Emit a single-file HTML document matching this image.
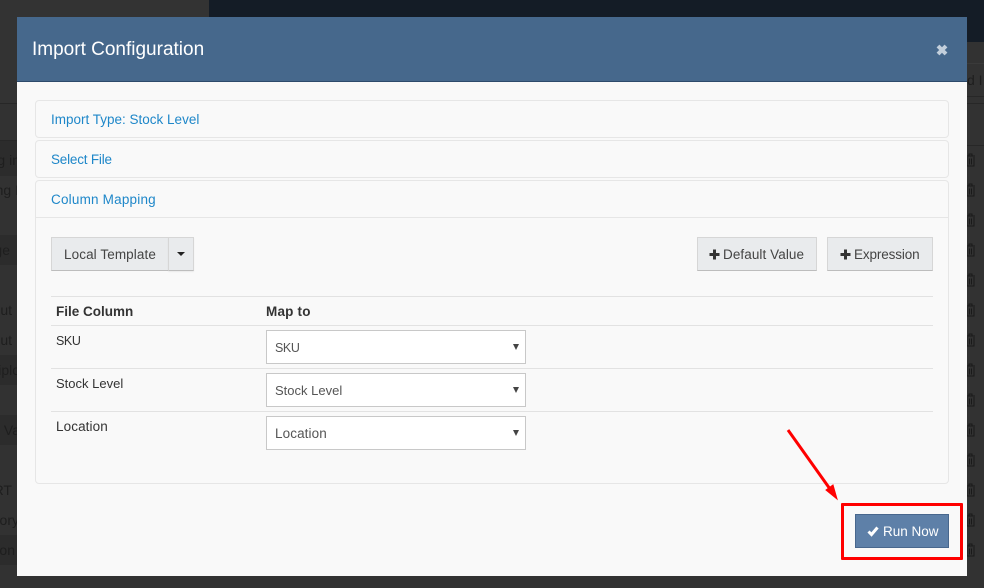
<!DOCTYPE html>
<html><head><meta charset="utf-8"><style>
html,body{margin:0;padding:0}
body{width:984px;height:588px;position:relative;overflow:hidden;background:#323232;font-family:"Liberation Sans",sans-serif;font-size:13.5px;color:#333}
div,span{position:absolute;box-sizing:border-box}
.t{white-space:nowrap;line-height:16px}
.bg{color:#1e1e1e;font-size:14px;white-space:nowrap;line-height:16px}
.row{height:1px;background:#272727}
.panel{left:35px;width:914px;background:#f9f9f9;border:1px solid #e6e6e6;border-radius:4px}
.link{color:#1e87c9;left:51px}
.btn{background:#e9ebed;border:1px solid #d6d6d6;border-bottom:1px solid #bdbdbd;top:237px;height:34px}
.line{left:51px;width:882px;height:1px;background:#e2e2e2}
.sel{left:266px;width:260px;height:34px;background:#fff;border:1px solid #c8c8c8}
.sel i{position:absolute;left:246px;top:13px;width:0;height:0;border-left:3.500px solid transparent;border-right:3.500px solid transparent;border-top:6px solid #444}
.sel span{left:8px;top:9px;color:#555}
svg{position:absolute}
</style></head><body>
<div style="left:0;top:0;width:209px;height:103px;background:#333"></div>
<div style="left:209px;top:0;width:775px;height:42px;background:#141c26"></div>
<div class="row" style="left:0;top:103px;width:17px"></div>
<div class="row" style="left:0;top:140px;width:17px"></div>
<div style="left:0;top:141px;width:17px;height:35px;background:#2c2c2c"></div>
<div style="left:0;top:235px;width:17px;height:30px;background:#2c2c2c"></div>
<div style="left:0;top:355px;width:17px;height:30px;background:#2c2c2c"></div>
<div style="left:0;top:415px;width:17px;height:30px;background:#2c2c2c"></div>
<div style="left:0;top:535px;width:17px;height:30px;background:#2c2c2c"></div>
<div class="bg" style="right:964px;top:152px">g in</div>
<div class="bg" style="right:965px;top:182px">ng I</div>
<div class="bg" style="right:974px;top:242px">ge</div>
<div class="bg" style="right:972px;top:302px">ut</div>
<div class="bg" style="right:972px;top:332px">ut</div>
<div class="bg" style="right:964px;top:362px">iplo</div>
<div class="bg" style="right:964px;top:422px">e Va</div>
<div class="bg" style="right:972px;top:482px">RT</div>
<div class="bg" style="right:965px;top:512px">tory</div>
<div class="bg" style="right:969px;top:542px">on</div>
<div class="bg" style="left:967px;top:72px">d I</div>
<div class="row" style="left:967px;top:63px;width:17px;background:#3a3a3a"></div>
<div class="row" style="left:967px;top:96px;width:17px"></div>
<div class="row" style="left:967px;top:103px;width:17px"></div>
<div class="row" style="left:967px;top:145px;width:17px"></div>
<svg style="left:967px;top:140px" width="17" height="430" viewBox="0 0 17 430" fill="none" stroke="#191919" stroke-width="1">
<path d="M-1 16h9M0 17v9h7v-9M2.500 18.500v6M4.500 18.500v6M2 16v-2h3v2"/>
<path d="M-1 46h9M0 47v9h7v-9M2.500 48.500v6M4.500 48.500v6M2 46v-2h3v2"/>
<path d="M-1 76h9M0 77v9h7v-9M2.500 78.500v6M4.500 78.500v6M2 76v-2h3v2"/>
<path d="M-1 106h9M0 107v9h7v-9M2.500 108.500v6M4.500 108.500v6M2 106v-2h3v2"/>
<path d="M-1 136h9M0 137v9h7v-9M2.500 138.500v6M4.500 138.500v6M2 136v-2h3v2"/>
<path d="M-1 166h9M0 167v9h7v-9M2.500 168.500v6M4.500 168.500v6M2 166v-2h3v2"/>
<path d="M-1 196h9M0 197v9h7v-9M2.500 198.500v6M4.500 198.500v6M2 196v-2h3v2"/>
<path d="M-1 226h9M0 227v9h7v-9M2.500 228.500v6M4.500 228.500v6M2 226v-2h3v2"/>
<path d="M-1 256h9M0 257v9h7v-9M2.500 258.500v6M4.500 258.500v6M2 256v-2h3v2"/>
<path d="M-1 286h9M0 287v9h7v-9M2.500 288.500v6M4.500 288.500v6M2 286v-2h3v2"/>
<path d="M-1 316h9M0 317v9h7v-9M2.500 318.500v6M4.500 318.500v6M2 316v-2h3v2"/>
<path d="M-1 346h9M0 347v9h7v-9M2.500 348.500v6M4.500 348.500v6M2 346v-2h3v2"/>
<path d="M-1 376h9M0 377v9h7v-9M2.500 378.500v6M4.500 378.500v6M2 376v-2h3v2"/>
<path d="M-1 406h9M0 407v9h7v-9M2.500 408.500v6M4.500 408.500v6M2 406v-2h3v2"/>
</svg>
<div style="left:17px;top:17px;width:950px;height:559px;background:#f9f9f9"></div>
<div style="left:17px;top:17px;width:950px;height:65px;background:#46688c;border-bottom:1px solid #2d4a6b"></div>
<div class="t" style="left:32px;top:39px;font-size:19px;line-height:21px;color:#fff">Import Configuration</div>
<svg style="left:935px;top:43px" width="14" height="14" viewBox="0 0 14 14"><path d="M3 3l8 8M11 3l-8 8" stroke="#c3cfdc" stroke-width="4"/></svg>

<div class="panel" style="top:100px;height:38px"></div>
<div class="panel" style="top:140px;height:38px"></div>
<div class="panel" style="top:180px;height:304px"></div>
<div style="left:36px;top:217px;width:912px;height:1px;background:#e6e6e6"></div>
<div class="t link" style="top:112px">Import Type: Stock Level</div>
<div class="t link" style="top:152px;letter-spacing:-.2px">Select File</div>
<div class="t link" style="top:192px;letter-spacing:.2px">Column Mapping</div>

<div class="btn" style="left:51px;width:118px"></div>
<div class="t" style="left:64px;top:247px;color:#444;letter-spacing:.1px">Local Template</div>
<div class="btn" style="left:168px;width:26px;box-shadow:0 1px 1px rgba(0,0,0,.06)"></div>
<div style="left:177px;top:252px;width:0;height:0;border-left:4px solid transparent;border-right:4px solid transparent;border-top:4px solid #222"></div>

<div class="btn" style="left:697px;width:120px"></div>
<svg style="left:709px;top:249px" width="11" height="11" viewBox="0 0 11 11"><path d="M5.500 0.500v10M0.500 5.500h10" stroke="#333" stroke-width="3"/></svg>
<div class="t" style="left:723px;top:247px;color:#444;letter-spacing:.08px">Default Value</div>
<div class="btn" style="left:827px;width:106px"></div>
<svg style="left:840px;top:249px" width="11" height="11" viewBox="0 0 11 11"><path d="M5.500 0.500v10M0.500 5.500h10" stroke="#333" stroke-width="3"/></svg>
<div class="t" style="left:854px;top:247px;color:#444;letter-spacing:-.13px">Expression</div>

<div class="line" style="top:296px"></div>
<div class="line" style="top:325px"></div>
<div class="line" style="top:368px"></div>
<div class="line" style="top:411px"></div>
<div class="t" style="left:56px;top:304px;font-weight:bold">File Column</div>
<div class="t" style="left:266px;top:304px;font-weight:bold;letter-spacing:.2px">Map to</div>
<div class="t" style="left:56px;top:333px;font-size:12.5px;letter-spacing:-.4px">SKU</div>
<div class="t" style="left:56px;top:376px;font-size:13px">Stock Level</div>
<div class="t" style="left:56px;top:419px;letter-spacing:.1px">Location</div>
<div class="sel" style="top:330px"><span class="t" style="font-size:12.5px;letter-spacing:-.4px">SKU</span><i></i></div>
<div class="sel" style="top:373px"><span class="t" style="font-size:13px">Stock Level</span><i></i></div>
<div class="sel" style="top:416px"><span class="t" style="letter-spacing:.1px">Location</span><i></i></div>

<div style="left:855px;top:514px;width:94px;height:34px;background:#5e80a8;border:1px solid #48678d"></div>
<svg style="left:867px;top:526px" width="12" height="11" viewBox="0 0 12 11"><path d="M1.500 5.500l3 3 6-7" fill="none" stroke="#fff" stroke-width="3"/></svg>
<div class="t" style="left:883px;top:524px;color:#fff">Run Now</div>

<div style="left:841px;top:503px;width:122px;height:57px;border:3px solid #f00;border-radius:1px"></div>
<svg style="left:780px;top:424px" width="64" height="80" viewBox="0 0 64 80"><path d="M8 6L50 65" stroke="#f00" stroke-width="3" fill="none"/><path d="M57 75L46 66L53 61Z" fill="#f00" stroke="#f00" stroke-width="1"/></svg>
</body></html>
